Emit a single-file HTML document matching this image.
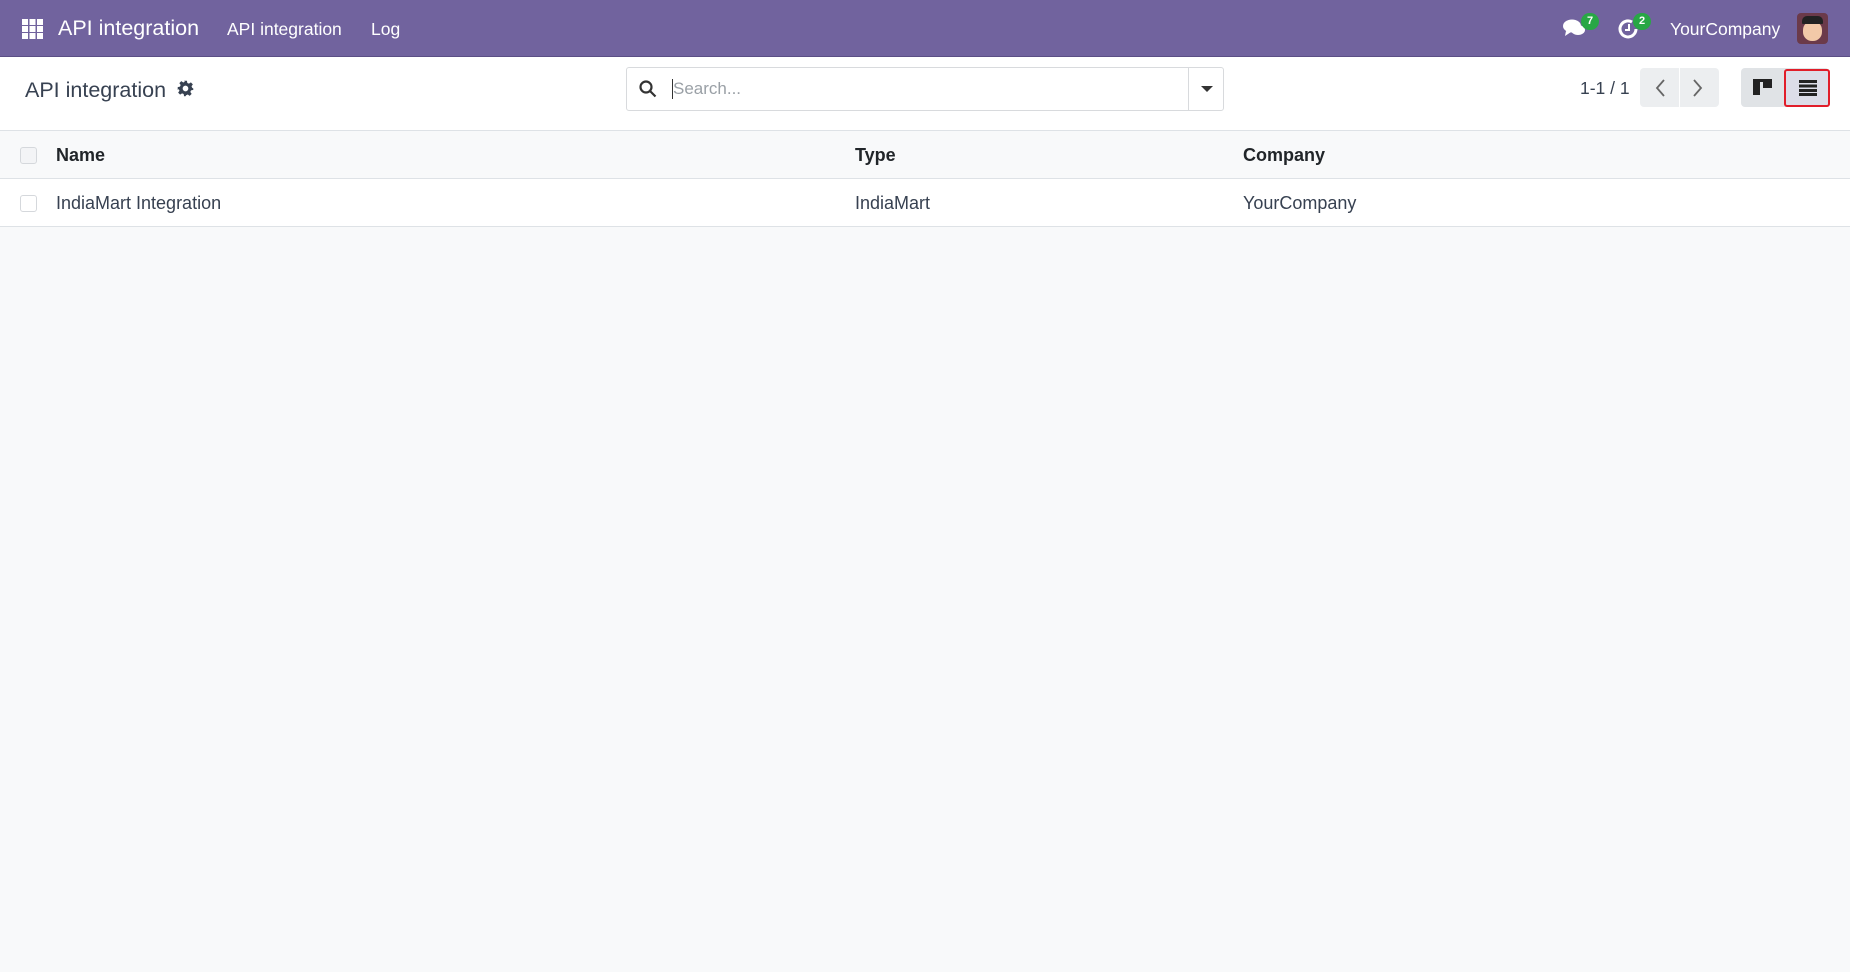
<!DOCTYPE html>
<html><head><meta charset="utf-8"><style>
*{box-sizing:border-box;margin:0;padding:0}
body{width:1850px;height:972px;background:#f8f9fa;font-family:"Liberation Sans","DejaVu Sans",sans-serif;color:#374151;overflow:hidden;position:relative}
.nav{position:absolute;left:0;top:0;width:1850px;height:57px;background:#71639e;border-bottom:1px solid #5b4f85;color:#fff}
.nav span{position:absolute;top:19px;font-size:17.5px}
.cp{position:absolute;left:0;top:57px;width:1850px;height:74px;background:#fff;border-bottom:1px solid #dee2e6}
.tbl{position:absolute;left:0;top:131px;width:1850px}
.row{position:relative;height:48px;border-bottom:1px solid #dee2e6;font-size:18px}
.row span{position:absolute;top:14px}
.cb{position:absolute;left:20px;top:16px;width:17px;height:17px;border:1px solid #d5d8dc;border-radius:3px;background:#fff}
.badge{position:absolute;top:13px;background:#28a745;color:#fff;font-size:11px;font-weight:bold;border-radius:9px;width:18px;height:17px;text-align:center;line-height:17px}
</style></head><body>
<div class="nav">
 <svg style="position:absolute;left:22px;top:19px" width="21" height="20" viewBox="0 0 21 20" fill="#fff">
  <rect x="0" y="0" width="6" height="6"/><rect x="7.5" y="0" width="6" height="6"/><rect x="15" y="0" width="6" height="6"/>
  <rect x="0" y="7" width="6" height="6"/><rect x="7.5" y="7" width="6" height="6"/><rect x="15" y="7" width="6" height="6"/>
  <rect x="0" y="14" width="6" height="6"/><rect x="7.5" y="14" width="6" height="6"/><rect x="15" y="14" width="6" height="6"/></svg>
 <span style="left:58px;top:16px;font-size:21.5px">API integration</span>
 <span style="left:227px">API integration</span>
 <span style="left:371px">Log</span>
 <svg style="position:absolute;left:1563px;top:18px" width="24" height="20" viewBox="0 0 24 20" fill="#fff"><ellipse cx="9" cy="8" rx="9" ry="6.5"/><path d="M3 13l-1 5 6-4z"/><ellipse cx="15" cy="12" rx="7" ry="5"/></svg>
 <div class="badge" style="left:1581px">7</div>
 <svg style="position:absolute;left:1618px;top:18px" width="22" height="22" viewBox="0 0 22 22" fill="none" stroke="#fff" stroke-width="3"><path d="M18 11a8 8 0 1 1-4-7"/><path d="M11 6v6h-4" stroke-width="2"/></svg>
 <div class="badge" style="left:1633px">2</div>
 <span style="left:1670px">YourCompany</span>
 <div style="position:absolute;left:1797px;top:13px;width:31px;height:31px;border-radius:4px;background:#6b3a4a"><div style="position:absolute;left:6px;top:8px;width:19px;height:20px;border-radius:9px;background:#f2c9a8"></div><div style="position:absolute;left:5px;top:3px;width:21px;height:8px;border-radius:5px 5px 1px 1px;background:#222"></div></div>
</div>
<div class="cp">
 <div style="position:absolute;left:25px;top:21px;font-size:21.5px;color:#374151">API integration</div>
 <svg style="position:absolute;left:177px;top:23px" width="17" height="17" viewBox="0 0 24 24" fill="#374151"><path d="M10 1h4l.6 3.2 2.3 1 2.7-1.9 2.8 2.8-1.9 2.7 1 2.3L23 12v0 2l-3.2.6-1 2.3 1.9 2.7-2.8 2.8-2.7-1.9-2.3 1L12 23h-2l-.6-3.2-2.3-1-2.7 1.9-2.8-2.8 1.9-2.7-1-2.3L1 14v-4l3.2-.6 1-2.3-1.9-2.7 2.8-2.8 2.7 1.9 2.3-1zM12 8a4 4 0 1 0 0 8 4 4 0 0 0 0-8z"/></svg>
 <div style="position:absolute;left:626px;top:10px;width:598px;height:44px;border:1px solid #d8dadd;border-radius:3px;background:#fff">
  <svg style="position:absolute;left:12px;top:12px" width="18" height="18" viewBox="0 0 18 18" fill="none" stroke="#333" stroke-width="2.2"><circle cx="7" cy="7" r="5.5"/><path d="M11 11l5.5 5.5"/></svg>
  <div style="position:absolute;left:45px;top:11px;width:1px;height:20px;background:#333"></div>
  <span style="position:absolute;left:46px;top:11px;font-size:17px;color:#9aa0a6">Search...</span>
  <div style="position:absolute;left:561px;top:0;width:1px;height:42px;background:#d8dadd"></div>
  <div style="position:absolute;left:574px;top:18px;border-left:6px solid transparent;border-right:6px solid transparent;border-top:6px solid #333"></div>
 </div>
 <div style="position:absolute;left:1580px;top:21px;font-size:17.5px;color:#374151">1-1 / 1</div>
 <div style="position:absolute;left:1640px;top:11px;width:79px;height:39px;background:#eceef0;border-radius:4px"><div style="position:absolute;left:39px;top:0;width:1px;height:39px;background:#fff"></div>
  <svg style="position:absolute;left:14px;top:11px" width="50" height="18" viewBox="0 0 50 18" fill="none" stroke="#666" stroke-width="1.8"><path d="M10 1L3 9l7 8M40 1l7 8-7 8"/></svg></div>
 <div style="position:absolute;left:1741px;top:11px;width:88px;height:39px;background:#e0e3e6;border-radius:4px"></div>
 <svg style="position:absolute;left:1753px;top:22px" width="19" height="16" viewBox="0 0 19 16" fill="#222"><rect x="0" y="0" width="19" height="3"/><rect x="0" y="0" width="7" height="16"/><rect x="10" y="0" width="9" height="9"/></svg>
 <div style="position:absolute;left:1784px;top:12px;width:46px;height:38px;border:2px solid #e11d2a;background:#dcdde8;border-radius:3px">
  <svg style="position:absolute;left:13px;top:9px" width="18" height="16" viewBox="0 0 18 16" fill="#222"><rect y="0" width="18" height="3"/><rect y="4.5" width="18" height="3"/><rect y="9" width="18" height="3"/><rect y="13" width="18" height="3"/></svg></div>
</div>
<div class="tbl">
 <div class="row" style="font-weight:bold;color:#212529;background:#f8f9fa"><div class="cb" style="background:#f3f4f6"></div><span style="left:56px">Name</span><span style="left:855px">Type</span><span style="left:1243px">Company</span></div>
 <div class="row" style="background:#fff"><div class="cb"></div><span style="left:56px">IndiaMart Integration</span><span style="left:855px">IndiaMart</span><span style="left:1243px">YourCompany</span></div>
</div>
</body></html>
